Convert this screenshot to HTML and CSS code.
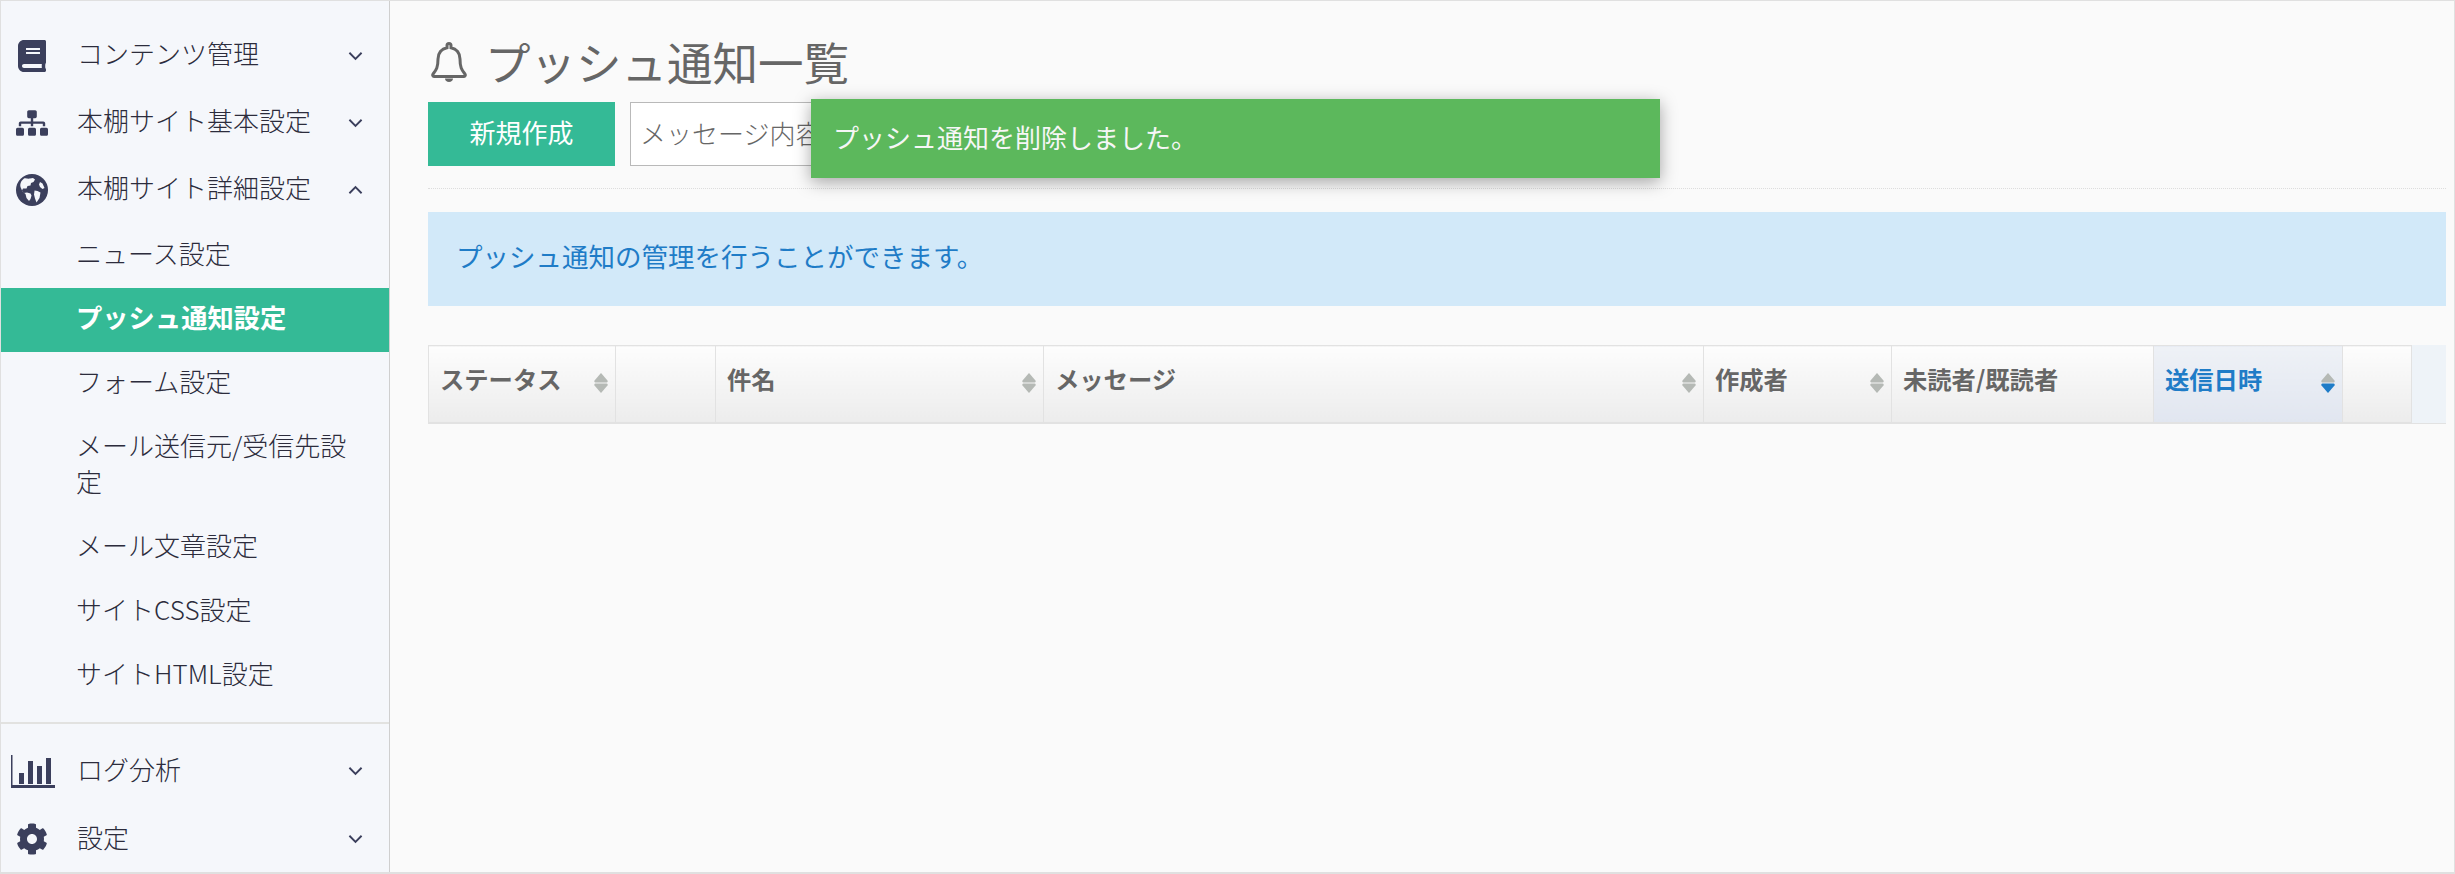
FILE: index.html
```html
<!DOCTYPE html>
<html lang="ja">
<head>
<meta charset="utf-8">
<title>プッシュ通知一覧</title>
<link rel="stylesheet" href="styles.css">
</head>
<body>
<div class="app">
  <aside class="sidebar">
    <nav class="menu">
      <a class="item">
        <svg class="ico" viewBox="0 0 448 512"><path d="M448 360V24c0-13.300-10.700-24-24-24H96C43 0 0 43 0 96v320c0 53 43 96 96 96h328c13.300 0 24-10.700 24-24v-16c0-7.500-3.500-14.300-8.900-18.700-4.200-15.400-4.200-59.300 0-74.700 5.400-4.300 8.900-11.100 8.900-18.600zM128 134c0-3.300 2.700-6 6-6h212c3.300 0 6 2.700 6 6v20c0 3.300-2.700 6-6 6H134c-3.300 0-6-2.700-6-6v-20zm0 64c0-3.300 2.700-6 6-6h212c3.300 0 6 2.700 6 6v20c0 3.300-2.700 6-6 6H134c-3.300 0-6-2.700-6-6v-20zm253.400 250H96c-17.700 0-32-14.300-32-32 0-17.600 14.400-32 32-32h285.400c-1.900 17.100-1.900 46.900 0 64z"/></svg>
        <span class="label">コンテンツ管理</span>
        <svg class="chev" viewBox="0 0 16 10"><path d="M1.500 1.500 8 8l6.500-6.500"/></svg>
      </a>
      <a class="item">
        <svg class="ico" viewBox="0 0 640 512"><path d="M128 352H32c-17.670 0-32 14.330-32 32v96c0 17.670 14.330 32 32 32h96c17.670 0 32-14.330 32-32v-96c0-17.670-14.330-32-32-32zm-24-80h192v48h48v-48h192v48h48v-57.590c0-21.170-17.230-38.410-38.410-38.410H344v-64h40c17.670 0 32-14.330 32-32V32c0-17.670-14.330-32-32-32H256c-17.670 0-32 14.330-32 32v96c0 17.670 14.330 32 32 32h40v64H94.410C73.230 224 56 241.230 56 262.410V320h48v-48zm264 80h-96c-17.670 0-32 14.330-32 32v96c0 17.670 14.330 32 32 32h96c17.670 0 32-14.330 32-32v-96c0-17.670-14.330-32-32-32zm240 0h-96c-17.670 0-32 14.330-32 32v96c0 17.670 14.330 32 32 32h96c17.670 0 32-14.330 32-32v-96c0-17.670-14.330-32-32-32z"/></svg>
        <span class="label">本棚サイト基本設定</span>
        <svg class="chev" viewBox="0 0 16 10"><path d="M1.500 1.500 8 8l6.500-6.500"/></svg>
      </a>
      <a class="item">
        <svg class="ico" viewBox="0 0 32 32"><circle cx="16" cy="16" r="16"/><path class="cut" d="M8 4.500c2-.5 4 .5 6 0l3-.5 2 1.500-1.500 2.500-2.500 1-.5 2.500-3 .5-1 2.500-3.500 0-1 2 2 2.500 3-.5 3.500 1 1 2-1 3.500-1.500 2-2.500-3-1-4-3-2.500-2-4.500C3.500 9 6 6 8 4.500zM18.500 16.500l3 .5 3 1.500-1 5.500-3 4.500-1.500-4-1-4 .5-3.500zM24 8l2.500 1.500 2 4.500-2 1-2.500-2-1-2.500z"/></svg>
        <span class="label">本棚サイト詳細設定</span>
        <svg class="chev" viewBox="0 0 16 10"><path d="M1.500 8.500 8 2l6.500 6.500"/></svg>
      </a>
      <div class="subs">
        <a class="sub">ニュース設定</a>
        <a class="sub active">プッシュ通知設定</a>
        <a class="sub">フォーム設定</a>
        <a class="sub">メール送信元/受信先設定</a>
        <a class="sub">メール文章設定</a>
        <a class="sub">サイトCSS設定</a>
        <a class="sub">サイトHTML設定</a>
      </div>
    </nav>
    <nav class="menu-bottom">
      <a class="item">
        <svg class="ico-chart" viewBox="0 0 44 33"><path d="M0 0h1.500v30H44v3H0z"/><path d="M8 18h5v11H8zM17 6h5v23h-5zM26 11h5v18h-5zM35 3h5v26h-5z"/></svg>
        <span class="label">ログ分析</span>
        <svg class="chev" viewBox="0 0 16 10"><path d="M1.500 1.500 8 8l6.500-6.500"/></svg>
      </a>
      <a class="item">
        <svg class="ico" viewBox="0 0 512 512"><path d="M487.400 315.700l-42.600-24.600c4.300-23.200 4.300-47 0-70.200l42.600-24.600c4.900-2.800 7.100-8.600 5.500-14-11.100-35.600-30-67.800-54.700-94.600-3.800-4.100-10-5.100-14.800-2.300L380.800 110c-17.900-15.400-38.500-27.300-60.800-35.100V25.800c0-5.600-3.900-10.500-9.400-11.700-36.700-8.200-74.300-7.800-109.200 0-5.500 1.200-9.400 6.100-9.400 11.700V75c-22.200 7.900-42.800 19.800-60.800 35.100L88.700 85.500c-4.900-2.800-11-1.900-14.800 2.300-24.700 26.700-43.600 58.900-54.700 94.600-1.700 5.400.6 11.200 5.500 14L67.300 221c-4.300 23.200-4.300 47 0 70.200l-42.600 24.600c-4.900 2.800-7.100 8.600-5.500 14 11.100 35.600 30 67.800 54.700 94.600 3.800 4.100 10 5.100 14.800 2.300l42.600-24.600c17.900 15.400 38.500 27.300 60.800 35.100v49.200c0 5.600 3.900 10.500 9.400 11.700 36.700 8.200 74.300 7.800 109.200 0 5.500-1.200 9.400-6.100 9.400-11.700v-49.200c22.200-7.900 42.800-19.800 60.800-35.100l42.600 24.600c4.900 2.800 11 1.900 14.800-2.300 24.700-26.700 43.600-58.900 54.700-94.600 1.500-5.500-.7-11.300-5.600-14.100zM256 336c-44.100 0-80-35.900-80-80s35.900-80 80-80 80 35.900 80 80-35.900 80-80 80z"/></svg>
        <span class="label">設定</span>
        <svg class="chev" viewBox="0 0 16 10"><path d="M1.500 1.500 8 8l6.500-6.500"/></svg>
      </a>
    </nav>
  </aside>
  <main class="main">
    <h1 class="title">
      <svg class="bell" viewBox="0 0 36 40"><path d="M18 1.500a2 2 0 0 1 2 2v2.200c5.500 1 9 5.500 9 11.300 0 9 2 11 5 15 .8 1.200 0 2.500-1.500 2.500h-29C2 34.500 1.200 33.200 2 32c3-4 5-6 5-15C7 11.200 10.500 6.700 16 5.700V3.500a2 2 0 0 1 2-2z"/><path class="clap" d="M14 36.500h8c0 2-1.800 3.500-4 3.500s-4-1.500-4-3.500z"/></svg>
      <span>プッシュ通知一覧</span>
    </h1>
    <div class="toolbar">
      <button class="btn">新規作成</button>
      <input class="search" type="text" placeholder="メッセージ内容">
    </div>
    <div class="info">プッシュ通知の管理を行うことができます。</div>
    <div class="table-wrap">
      <table class="table">
        <colgroup>
          <col class="c1"><col class="c2"><col class="c3"><col class="c4"><col class="c5"><col class="c6"><col class="c7"><col class="c8">
        </colgroup>
        <thead>
          <tr>
            <th><div class="th"><span>ステータス</span><svg class="sort" viewBox="0 0 14 20"><path d="M7 0l6.500 7.500c.5 1.200 0 2-1 2H1.500c-1 0-1.500-.8-1-2z"/><path d="M1.500 10.500h11c1 0 1.500.8 1 2L7 20 .5 12.500c-.5-1.200 0-2 1-2z"/></svg></div></th>
            <th></th>
            <th><div class="th"><span>件名</span><svg class="sort" viewBox="0 0 14 20"><path d="M7 0l6.500 7.500c.5 1.200 0 2-1 2H1.500c-1 0-1.500-.8-1-2z"/><path d="M1.500 10.500h11c1 0 1.500.8 1 2L7 20 .5 12.500c-.5-1.200 0-2 1-2z"/></svg></div></th>
            <th><div class="th"><span>メッセージ</span><svg class="sort" viewBox="0 0 14 20"><path d="M7 0l6.500 7.500c.5 1.200 0 2-1 2H1.500c-1 0-1.500-.8-1-2z"/><path d="M1.500 10.500h11c1 0 1.500.8 1 2L7 20 .5 12.500c-.5-1.200 0-2 1-2z"/></svg></div></th>
            <th><div class="th"><span>作成者</span><svg class="sort" viewBox="0 0 14 20"><path d="M7 0l6.500 7.500c.5 1.200 0 2-1 2H1.500c-1 0-1.500-.8-1-2z"/><path d="M1.500 10.500h11c1 0 1.500.8 1 2L7 20 .5 12.500c-.5-1.200 0-2 1-2z"/></svg></div></th>
            <th><div class="th"><span>未読者/既読者</span></div></th>
            <th class="sorted"><div class="th"><span>送信日時</span><svg class="sort" viewBox="0 0 14 20"><path d="M7 0l6.500 7.500c.5 1.200 0 2-1 2H1.500c-1 0-1.500-.8-1-2z"/><path class="down" d="M1.500 10.500h11c1 0 1.500.8 1 2L7 20 .5 12.500c-.5-1.200 0-2 1-2z"/></svg></div></th>
            <th></th>
          </tr>
        </thead>
      </table>
    </div>
    <div class="toast">プッシュ通知を削除しました。</div>
  </main>
</div>
</body>
</html>
```
FILE: styles.css
```css
* { box-sizing: border-box; }
html, body { margin: 0; height: 100%; }
body {
  font-family: "Noto Sans CJK JP", "Noto Sans", sans-serif;
  font-size: 26px;
  font-weight: 300;
  color: #2c2c3c;
  background: #fafafa;
  overflow: hidden;
}
.app {
  display: flex;
  height: 874px;
  border: 1px solid #e0e0e0;
  border-bottom-width: 2px;
}
.sidebar {
  width: 389px;
  flex: none;
  display: flex;
  flex-direction: column;
  background: #f5f7fb;
  border-right: 1px solid #cfcfcf;
  padding-top: 20px;
}
.menu { flex: 1; border-bottom: 2px solid #e2e2e0; }
.subs { padding-top: 2px; }
.menu-bottom {
  display: flex;
  flex-direction: column;
  gap: 1px;
  padding-top: 13px;
}
.item {
  display: flex;
  align-items: center;
  height: 67px;
  padding-bottom: 4px;
}
.ico {
  width: 32px;
  height: 32px;
  margin: 7px 29px 0 15px;
  flex: none;
  fill: #3b3f5c;
}
.ico .cut { fill: #f5f7fb; }
.ico-chart {
  width: 44px;
  height: 33px;
  margin: 5px 22px 0 10px;
  flex: none;
  fill: #3b3f5c;
}
.label { flex: 1; }
.chev {
  width: 15px;
  height: 10px;
  margin: 7px 26px 0 0;
  flex: none;
  fill: none;
  stroke: #3b3f5c;
  stroke-width: 2;
}
.menu-bottom .ico, .menu-bottom .chev { margin-top: 5px; }
.sub {
  display: block;
  padding: 11px 20px 17px 75px;
  line-height: 36px;
}
.sub.active {
  background: #34ba96;
  color: #fff;
  font-weight: 700;
  font-size: 26.3px;
}
.main {
  flex: 1;
  min-width: 0;
  position: relative;
  padding: 0 8px 0 38px;
  font-weight: 400;
}
.title {
  display: flex;
  align-items: center;
  gap: 18px;
  height: 101px;
  margin: 0;
  padding: 20px 0 0 3px;
  font-size: 45.5px;
  font-weight: 400;
  color: #666;
  line-height: 1;
}
.bell {
  width: 36px;
  height: 40px;
  fill: none;
  stroke: #666;
  stroke-width: 3;
}
.bell .clap { fill: #666; stroke: none; }
.toolbar {
  display: flex;
  gap: 15px;
  height: 87px;
  align-items: flex-start;
  border-bottom: 1px dotted #ddd;
}
.btn {
  width: 187px;
  height: 64px;
  border: 0;
  padding: 0 0 6px;
  background: #34ba96;
  color: #fff;
  font: inherit;
}
.search {
  width: 420px;
  height: 64px;
  border: 1px solid #b9b9b9;
  background: #fff;
  padding: 0 0 4px 9px;
  font: inherit;
  font-weight: 300;
}
.search::placeholder { color: #666; opacity: 1; }
.info {
  height: 94px;
  margin-top: 23px;
  padding: 0 0 8px 28px;
  display: flex;
  align-items: center;
  background: #d2e9f9;
  color: #1f7cc7;
  font-size: 26.5px;
}
.table-wrap {
  margin-top: 39px;
  background: #eef3f8;
  border-bottom: 1px solid #e2e2e2;
}
.table {
  width: 1983px;
  table-layout: fixed;
  border-collapse: collapse;
}
.c1 { width: 187px; }
.c2 { width: 100px; }
.c3 { width: 328px; }
.c4 { width: 660px; }
.c5 { width: 188px; }
.c6 { width: 262px; }
.c7 { width: 189px; }
.c8 { width: 69px; }
.table th {
  height: 77px;
  padding: 0;
  border: 1px solid #e2e2e2;
  background: linear-gradient(#fdfdfd, #ececec);
  font-size: 24.3px;
  font-weight: 700;
  color: #666;
  text-align: left;
}
.table th.sorted {
  background: linear-gradient(#eef1f6, #e1e6f0);
  color: #1f7cc7;
}
.th {
  display: flex;
  align-items: center;
  justify-content: space-between;
  padding: 0 7px 11px 11px;
}
.sort { width: 14px; height: 20px; margin-top: 9px; fill: #b5b9b5; flex: none; }
.sort .down { fill: #1f7cc7; }
.toast {
  position: absolute;
  left: 421px;
  top: 98px;
  width: 849px;
  height: 79px;
  padding: 0 0 4px 22px;
  display: flex;
  align-items: center;
  background: #5cb85c;
  color: #f6f6f6;
  font-size: 26px;
  box-shadow: 0 4px 16px rgba(0,0,0,.35);
}
```
